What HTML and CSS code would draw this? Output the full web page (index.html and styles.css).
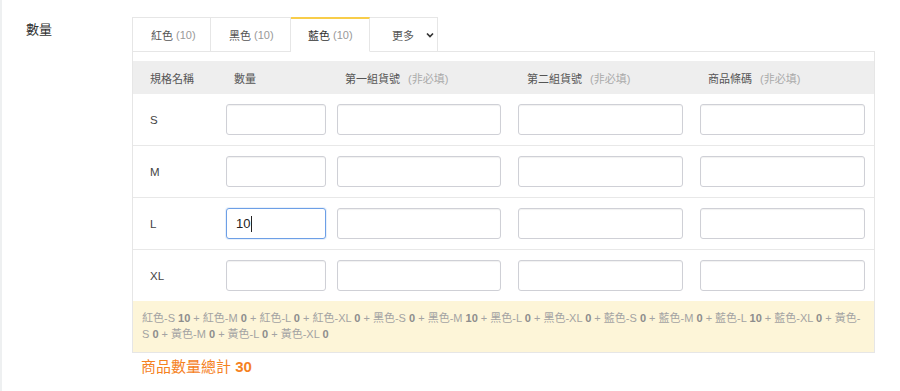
FILE: index.html
```html
<!DOCTYPE html>
<html lang="zh-Hant">
<head>
  <meta charset="UTF-8">
  <title>數量</title>
  <meta name="viewport" content="width=device-width, initial-scale=1.0">
  <link rel="stylesheet" href="styles.css">
</head>
<body>

  <div class="field">
    <div class="field-label">數量</div>
    <div class="field-body">

      <div class="tabs">
        <div class="tab">紅色 <span class="count">(10)</span></div>
        <div class="tab">黑色 <span class="count">(10)</span></div>
        <div class="tab active">藍色 <span class="count">(10)</span></div>
        <div class="tab more">更多
          <svg class="chevron" width="8" height="6" viewBox="0 0 8 6"><path d="M1 1.5 L4 4.5 L7 1.5" fill="none" stroke="#333" stroke-width="1.7"/></svg>
        </div>
        <div class="tabs-fill"></div>
      </div>

      <div class="panel">
        <div class="grid head">
          <div class="cell first">規格名稱</div>
          <div class="cell">數量</div>
          <div class="cell">第一組貨號<span class="optional">(非必填)</span></div>
          <div class="cell">第二組貨號<span class="optional">(非必填)</span></div>
          <div class="cell">商品條碼<span class="optional">(非必填)</span></div>
        </div>

        <div class="grid row">
          <div class="cell first">S</div>
          <div class="cell"><input class="qty" type="text"></div>
          <div class="cell"><input class="wide" type="text"></div>
          <div class="cell"><input class="wide" type="text"></div>
          <div class="cell"><input class="wide" type="text"></div>
        </div>
        <div class="grid row">
          <div class="cell first">M</div>
          <div class="cell"><input class="qty" type="text"></div>
          <div class="cell"><input class="wide" type="text"></div>
          <div class="cell"><input class="wide" type="text"></div>
          <div class="cell"><input class="wide" type="text"></div>
        </div>
        <div class="grid row">
          <div class="cell first">L</div>
          <div class="cell"><div class="qty fake-input focused">10<span class="caret"></span></div></div>
          <div class="cell"><input class="wide" type="text"></div>
          <div class="cell"><input class="wide" type="text"></div>
          <div class="cell"><input class="wide" type="text"></div>
        </div>
        <div class="grid row last">
          <div class="cell first">XL</div>
          <div class="cell"><input class="qty" type="text"></div>
          <div class="cell"><input class="wide" type="text"></div>
          <div class="cell"><input class="wide" type="text"></div>
          <div class="cell"><input class="wide" type="text"></div>
        </div>

        <div class="summary">
          紅色-S <b>10</b> + 紅色-M <b>0</b> + 紅色-L <b>0</b> + 紅色-XL <b>0</b> + 黑色-S <b>0</b> + 黑色-M <b>10</b> + 黑色-L <b>0</b> + 黑色-XL <b>0</b> + 藍色-S <b>0</b> + 藍色-M <b>0</b> + 藍色-L <b>10</b> + 藍色-XL <b>0</b> + 黃色-S <b>0</b> + 黃色-M <b>0</b> + 黃色-L <b>0</b> + 黃色-XL <b>0</b>
        </div>
      </div>

      <div class="total">商品數量總計 <b>30</b></div>
    </div>
  </div>

</body>
</html>
```

FILE: styles.css
```css
* {
  box-sizing: border-box;
}

body {
  margin: 0;
  min-height: 391px;
  border-left: 2px solid #eef0f1;
  font-family: "Liberation Sans", "Noto Sans CJK TC", sans-serif;
  color: #333;
  background: #fff;
}

.field {
  display: flex;
  padding-top: 17px;
}

.field-label {
  width: 130px;
  padding-left: 24px;
  margin-top: 3px;
  font-size: 13px;
  line-height: 20px;
  color: #333;
}

.field-body {
  width: 743px;
}

/* tabs */
.tabs {
  display: flex;
  height: 35px;
}

.tab {
  display: flex;
  align-items: center;
  height: 35px;
  padding-left: 18px;
  border: 1px solid #e6e6e6;
  border-left: none;
  font-size: 11px;
  color: #555;
  background: #fff;
}

.tab:first-child {
  border-left: 1px solid #e6e6e6;
}

.tab:nth-child(1) { width: 79px; }
.tab:nth-child(2) { width: 80px; }
.tab:nth-child(3) { width: 79px; }

.tab .count {
  color: #999;
  margin-left: 3px;
}

.tab.active {
  border-top: 2px solid #f8cd4a;
  border-bottom-color: #fff;
  color: #333;
  padding-left: 17px;
}

.tab.more {
  width: 68px;
  padding-left: 22px;
}

.chevron {
  margin-left: 12px;
}

.tabs-fill {
  flex: 1;
  border-bottom: 1px solid #e6e6e6;
}

/* panel */
.panel {
  border: 1px solid #e6e6e6;
  border-top: none;
  padding-top: 9px;
}

.grid {
  display: grid;
  grid-template-columns: 93px 111px 181px 182px 165px;
  padding-right: 8px;
}

.head {
  height: 33px;
  align-items: center;
  background: #eeeeee;
  font-size: 11px;
  color: #555;
}

.head .cell {
  padding-left: 8px;
}

.head .cell:nth-child(4) {
  padding-left: 9px;
}

.head .cell.first {
  padding-left: 17px;
}

.optional {
  color: #aaa;
  margin-left: 8px;
}

.row {
  height: 52px;
  align-items: center;
  border-bottom: 1px solid #e8e8e8;
  font-size: 11.5px;
}

.row.last {
  height: 51px;
  border-bottom: none;
}

.row .cell.first {
  padding-left: 17px;
  color: #444;
}

input,
.fake-input {
  display: block;
  height: 31px;
  margin: 0;
  padding: 0 9px;
  border: 1px solid #cfd0d6;
  border-radius: 3px;
  box-shadow: inset 0 1px 1px rgba(0, 0, 0, 0.06);
  font-family: inherit;
  font-size: 13px;
  background: #fff;
}

.qty {
  width: 100px;
}

.wide {
  width: 165px;
}

.cell:nth-child(3) .wide {
  width: 164px;
}

.fake-input {
  display: flex;
  align-items: center;
  color: #222;
}

.fake-input.focused {
  border-color: #6d9fe6;
  box-shadow: 0 0 0 1px rgba(109, 159, 230, 0.15);
}

.caret {
  display: inline-block;
  width: 1px;
  height: 16px;
  margin-left: 1px;
  background: #222;
}

.summary {
  padding: 9px 9px 10px;
  background: #fdf5d8;
  font-size: 11px;
  line-height: 16px;
  color: #a3a3a3;
}

.summary b {
  color: #8d8d8d;
}

.total {
  padding: 4px 0 0 9px;
  font-size: 15px;
  line-height: 20px;
  color: #f5821f;
}
```
